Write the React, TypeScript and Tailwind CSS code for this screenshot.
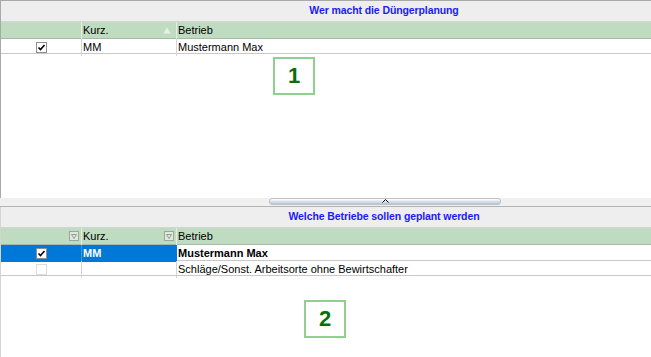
import React from "react";

const cols = "grid grid-cols-[81px_95px_1fr]";

function Check({ checked, disabled }: { checked?: boolean; disabled?: boolean }) {
  return (
    <span
      className={
        "flex h-[11px] w-[11px] items-center justify-center border bg-white " +
        (disabled ? "border-[#dcdcdc]" : "border-[#8e8f8f]")
      }
    >
      {checked ? (
        <svg width="9" height="9" viewBox="0 0 9 9">
          <path d="M1.5 4.5 L3.5 6.5 L7.5 2" fill="none" stroke="#000" strokeWidth="1.6" />
        </svg>
      ) : null}
    </span>
  );
}

function FilterIcon() {
  return (
    <span className="flex h-[10px] w-[10px] items-center justify-center border border-[#9aa89a] bg-[#dfe9df]">
      <svg width="6" height="5" viewBox="0 0 6 5">
        <path d="M0.5 0.5 H5.5 L3 4.5 Z" fill="none" stroke="#7f8a7f" strokeWidth="0.8" />
      </svg>
    </span>
  );
}

function Caption({ title }: { title: string }) {
  return (
    <div className="flex h-[21px] items-center justify-center border-b border-[#d4d4d4] bg-[#eeeeee] pl-[116px]">
      <span className="text-[10.5px] font-bold tracking-[-0.1px] text-[#1a1aff]">{title}</span>
    </div>
  );
}

function Marker({ n }: { n: string }) {
  return (
    <div className="flex h-[38px] w-[42px] items-center justify-center border-2 border-[#8fd08f] bg-white">
      <span className="text-[22px] font-bold leading-none text-[#0a6e0a]">{n}</span>
    </div>
  );
}

export default function App() {
  return (
    <div
      className="flex h-[357px] w-[651px] flex-col overflow-hidden bg-white text-[11px] text-black"
      style={{ fontFamily: "Tahoma, 'Liberation Sans', Arial, sans-serif" }}
    >
      {/* upper grid */}
      <section className="flex h-[198px] flex-col border-l border-t border-[#a9a9a9]">
        <Caption title="Wer macht die Düngerplanung" />
        <div className={cols + " h-[17px] border-b border-[#a8b8a8] bg-[#c0dcc0]"}>
          <div className="border-r border-[#e4efe4]" />
          <div className="flex items-center justify-between border-r border-[#e4efe4] pl-[1px] pr-[5px]">
            <span>Kurz.</span>
            <svg width="8" height="7" viewBox="0 0 8 7">
              <path d="M4 0.5 L7.5 6.5 H0.5 Z" fill="#e8f0e8" stroke="#d8e4d8" strokeWidth="0.8" />
            </svg>
          </div>
          <div className="flex items-center pl-[1px]">Betrieb</div>
        </div>
        <div className={cols + " h-[15px] border-b border-[#c8c8c8]"}>
          <div className="flex items-center justify-center border-r border-[#d4d4d4] pt-[1px]">
            <Check checked />
          </div>
          <div className="flex items-center border-r border-[#d4d4d4] pl-[1px]">MM</div>
          <div className="flex items-center pl-[1px]">Mustermann Max</div>
        </div>
        <div className="flex flex-1 justify-start pl-[272px] pt-[3px]">
          <Marker n="1" />
        </div>
      </section>

      {/* splitter */}
      <div className="flex h-[9px] justify-start border-b border-[#b4b4b4] bg-[#f0f0f0] pl-[269px]">
        <div className="flex h-[7px] w-[232px] items-start justify-center rounded-[3px] border border-[#b9c3cc] bg-gradient-to-b from-white to-[#b7c6d3]">
          <svg width="7" height="4" viewBox="0 0 7 4">
            <path d="M0.5 3.5 L3.5 0.5 L6.5 3.5" fill="none" stroke="#000" strokeWidth="1" />
          </svg>
        </div>
      </div>

      {/* lower grid */}
      <section className="flex flex-1 flex-col border-l border-[#d4d4d4]">
        <Caption title="Welche Betriebe sollen geplant werden" />
        <div className={cols + " h-[17px] border-b border-[#a8b8a8] bg-[#c0dcc0]"}>
          <div className="flex items-center justify-end border-r border-[#e4efe4] pr-[2px]">
            <FilterIcon />
          </div>
          <div className="flex items-center justify-between border-r border-[#e4efe4] pl-[1px] pr-[2px]">
            <span>Kurz.</span>
            <FilterIcon />
          </div>
          <div className="flex items-center pl-[1px]">Betrieb</div>
        </div>
        <div className={cols + " h-[16px] border-b border-[#c8c8c8]"}>
          <div className="flex items-center justify-center border-r border-[#3c96e0] bg-[#0078d7]">
            <Check checked />
          </div>
          <div className="flex items-center bg-[#0078d7] pl-[1px] font-bold text-white">MM</div>
          <div className="flex items-center pl-[1px] font-bold">Mustermann Max</div>
        </div>
        <div className={cols + " h-[15px] border-b border-[#c8c8c8]"}>
          <div className="flex items-center justify-center border-r border-[#d4d4d4]">
            <Check disabled />
          </div>
          <div className="border-r border-[#d4d4d4]" />
          <div className="flex items-center pl-[1px]">Schläge/Sonst. Arbeitsorte ohne Bewirtschafter</div>
        </div>
        <div className="flex flex-1 justify-start pl-[303px] pt-[24px]">
          <Marker n="2" />
        </div>
      </section>
    </div>
  );
}
